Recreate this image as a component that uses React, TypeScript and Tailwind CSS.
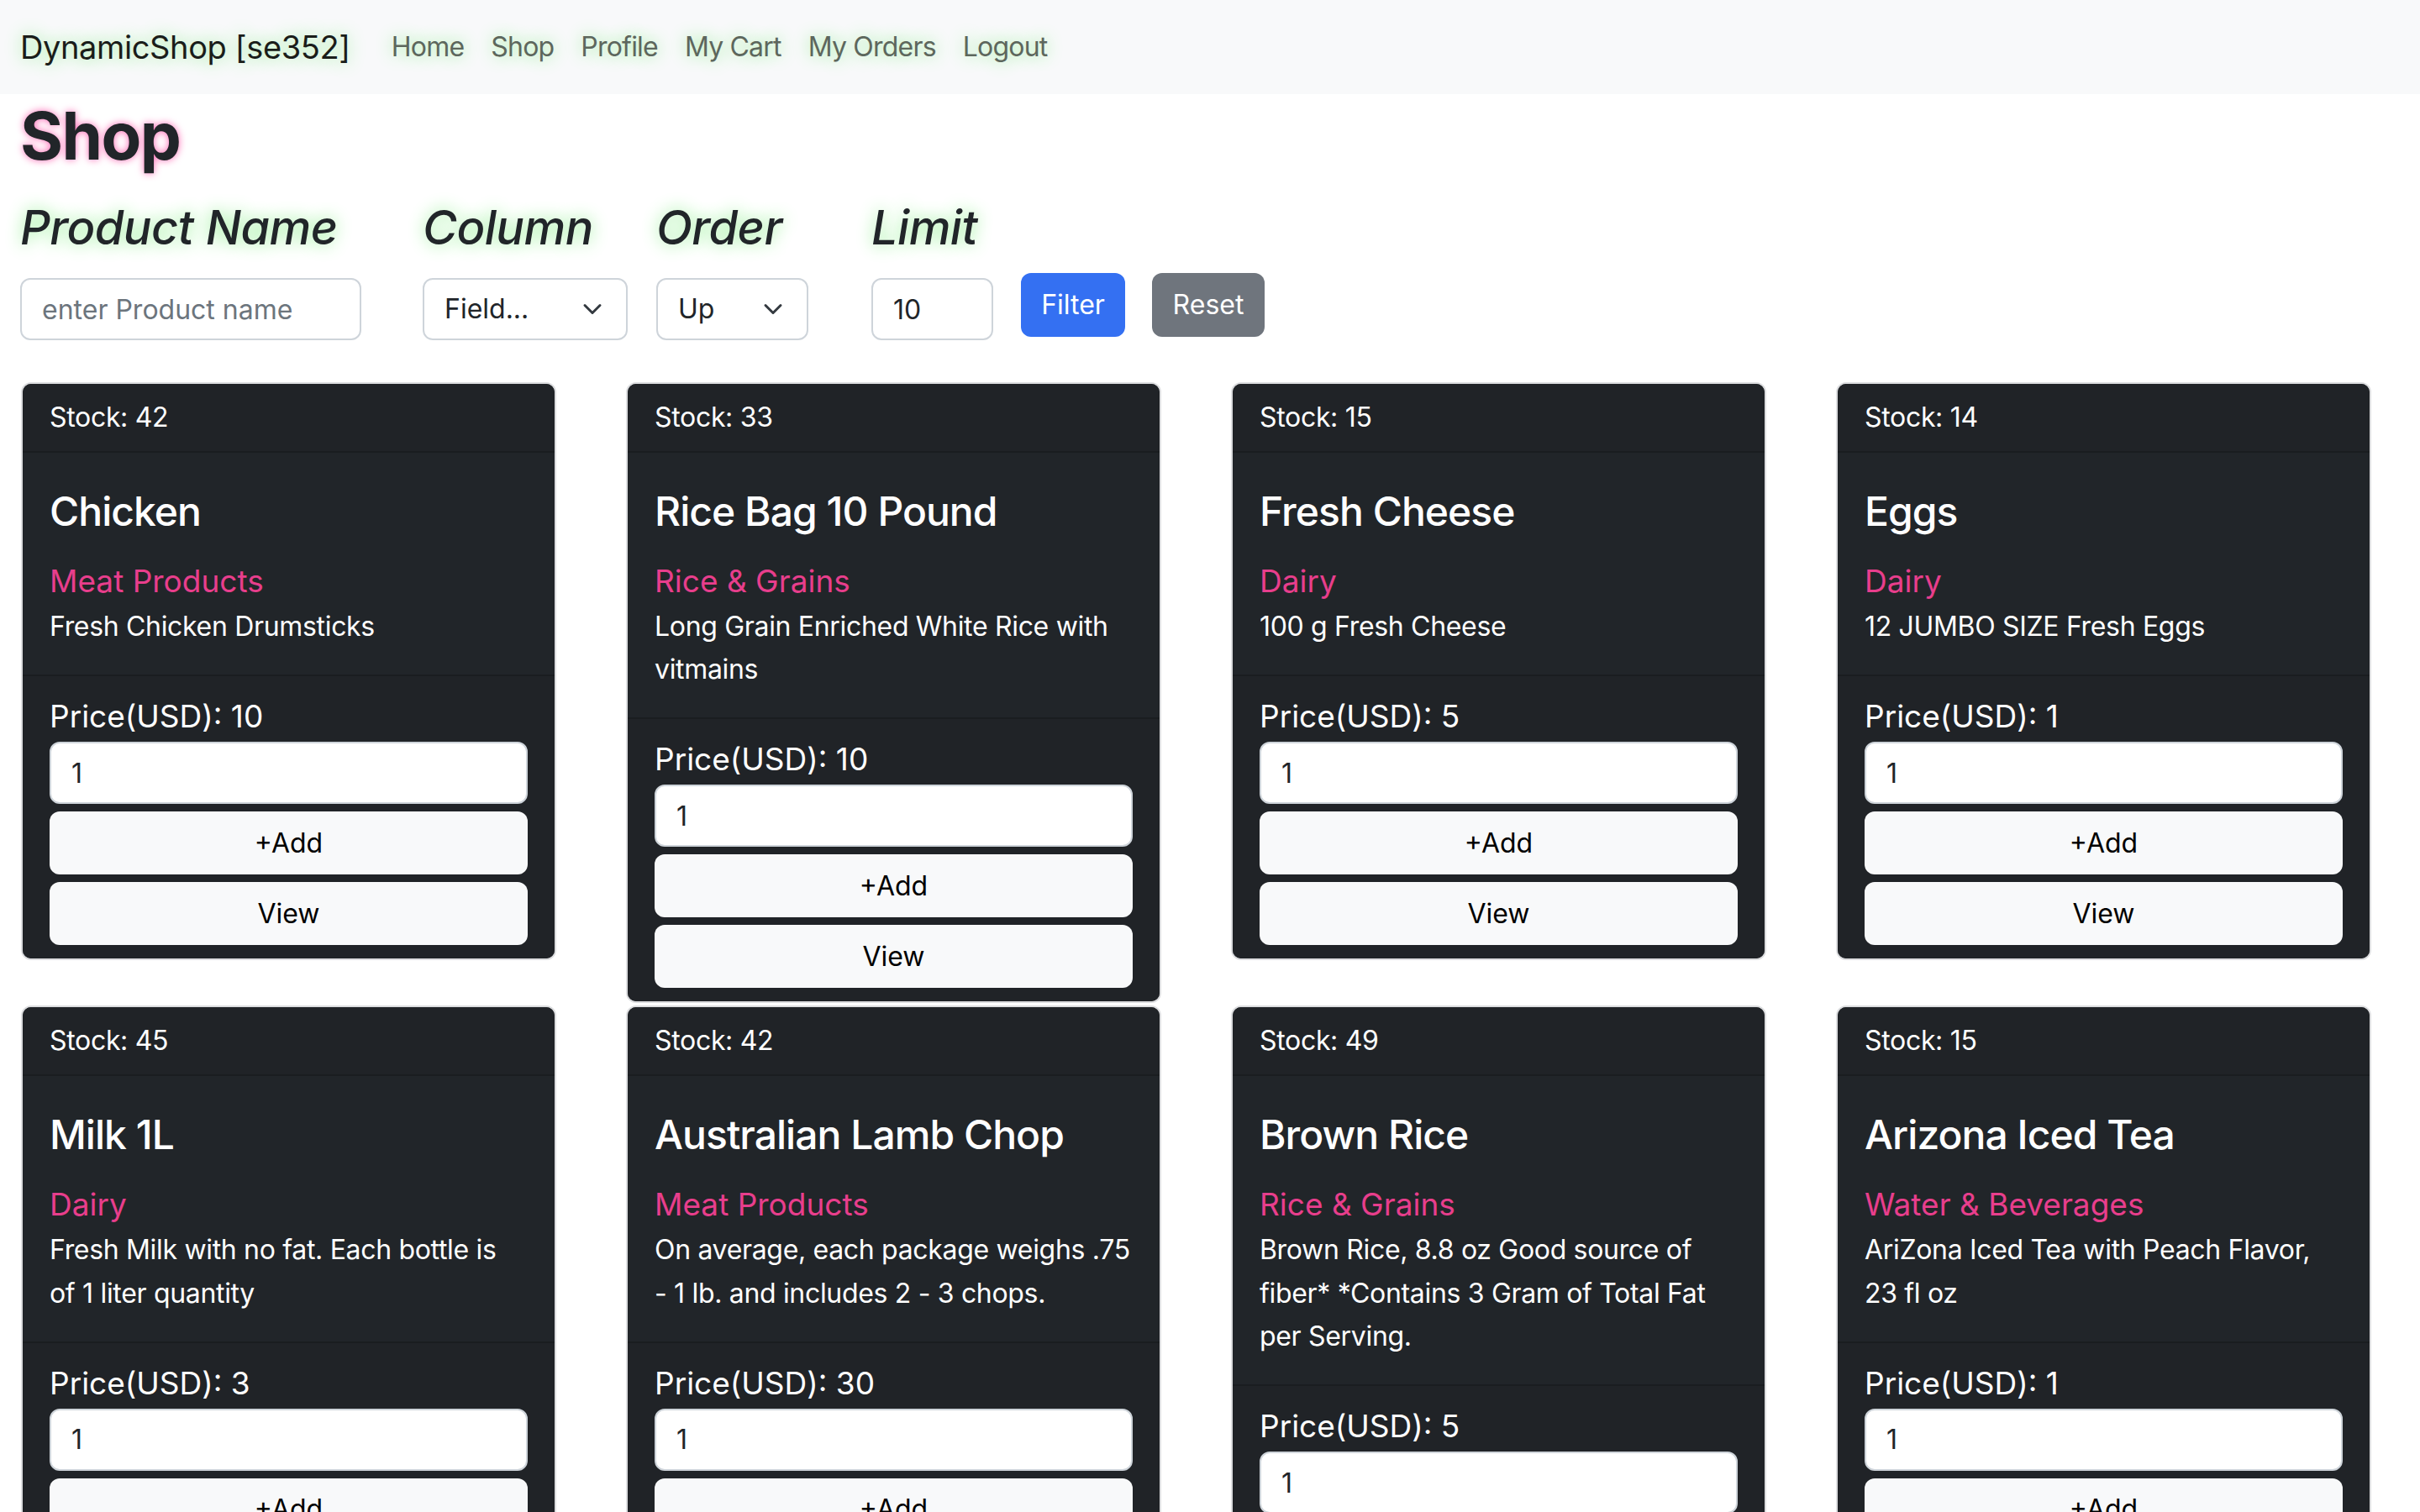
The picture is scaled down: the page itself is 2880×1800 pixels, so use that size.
import React from 'react';

interface Product {
  stock: number;
  name: string;
  category: string;
  desc: string[];
  price: number;
}

// description lines are split the way the page wraps them
const products: Product[] = [
  { stock: 42, name: 'Chicken', category: 'Meat Products', desc: ['Fresh Chicken Drumsticks'], price: 10 },
  { stock: 33, name: 'Rice Bag 10 Pound', category: 'Rice & Grains', desc: ['Long Grain Enriched White Rice with', 'vitmains'], price: 10 },
  { stock: 15, name: 'Fresh Cheese', category: 'Dairy', desc: ['100 g Fresh Cheese'], price: 5 },
  { stock: 14, name: 'Eggs', category: 'Dairy', desc: ['12 JUMBO SIZE Fresh Eggs'], price: 1 },
  { stock: 45, name: 'Milk 1L', category: 'Dairy', desc: ['Fresh Milk with no fat. Each bottle is', 'of 1 liter quantity'], price: 3 },
  { stock: 42, name: 'Australian Lamb Chop', category: 'Meat Products', desc: ['On average, each package weighs .75', '- 1 lb. and includes 2 - 3 chops.'], price: 30 },
  { stock: 49, name: 'Brown Rice', category: 'Rice & Grains', desc: ['Brown Rice, 8.8 oz Good source of', 'fiber* *Contains 3 Gram of Total Fat', 'per Serving.'], price: 5 },
  { stock: 15, name: 'Arizona Iced Tea', category: 'Water & Beverages', desc: ['AriZona Iced Tea with Peach Flavor,', '23 fl oz'], price: 1 },
];

const navLinks = ['Home', 'Shop', 'Profile', 'My Cart', 'My Orders', 'Logout'];

const Chevron = () => (
  <svg width="24" height="24" viewBox="0 0 16 16" fill="none" className="mr-[4px] shrink-0">
    <path d="m2 5 6 6 6-6" stroke="#343a40" strokeWidth="2" strokeLinecap="round" strokeLinejoin="round" />
  </svg>
);

const ProductCard: React.FC<{ p: Product }> = ({ p }) => (
  <div className="w-[637px] rounded-[12px] border-2 border-[#dcdddf] bg-[#212529] text-white overflow-hidden">
    <div className="px-[32px] py-[16px] text-[32px] leading-[48px] tracking-[-0.01em] bg-[#202327] border-b-2 border-[#1a1d20]">
      Stock: {p.stock}
    </div>
    <div className="p-[32px]">
      <h5 className="text-[48px] leading-[76px] mb-[17px] font-medium tracking-[-0.02em]">{p.name}</h5>
      <div className="text-[37px] leading-[56px] text-[#e83e8c]">{p.category}</div>
      <p className="text-[32px] leading-[51.2px] tracking-[-0.01em]">
        {p.desc.map((line, i) => (
          <span key={i} className="block whitespace-nowrap">
            {line}
          </span>
        ))}
      </p>
    </div>
    <div className="px-[32px] pt-[18px] pb-[16px] bg-[#202327] border-t-2 border-[#1a1d20]">
      <div className="text-[37px] leading-[60px]">Price(USD): {p.price}</div>
      <input
        type="number"
        defaultValue={1}
        className="w-full h-[74px] px-[24px] text-[32px] text-[#212529] bg-white border-2 border-[#ced4da] rounded-[12px] outline-none"
      />
      <button className="w-full h-[75px] mt-[9px] text-[32px] text-black bg-[#f8f9fa] rounded-[12px]">+Add</button>
      <button className="w-full h-[75px] mt-[9px] text-[32px] text-black bg-[#f8f9fa] rounded-[12px]">View</button>
    </div>
  </div>
);

const labelCls = 'text-[56px] leading-[77px] italic font-medium tracking-[-0.01em] mb-[21px] whitespace-nowrap [text-shadow:0_0_20px_#90ee90]';

const App: React.FC = () => {
  return (
    <div className="min-h-screen bg-white text-[#212529] font-[Inter,sans-serif] text-[32px] leading-[48px]">
      <nav className="h-[112px] bg-[#f8f9fa] flex items-center px-[24px]">
        <span className="text-[38px] leading-[60px] tracking-[-0.01em] mr-[33px] text-[#1a1d1a] [text-shadow:0_0_20px_#90ee90]">
          DynamicShop [se352]
        </span>
        {navLinks.map((l) => (
          <a key={l} className="px-[16px] text-[32px] tracking-[-0.025em] text-[#5d675d] [text-shadow:0_0_20px_#90ee90]">
            {l}
          </a>
        ))}
      </nav>

      <div className="px-[24px]">
        <h1 className="pt-[2px] text-[78px] leading-[96px] font-bold tracking-[-0.02em] [text-shadow:0_0_10px_#ff69b4]">Shop</h1>

        <div className="flex items-end mt-[23px]">
          <div className="flex flex-col w-[406px]">
            <h2 className={labelCls}>Product Name</h2>
            <input
              placeholder="enter Product name"
              className="w-[406px] h-[74px] px-[24px] text-[32px] border-2 border-[#ced4da] rounded-[12px] placeholder:text-[#6c757d] outline-none"
            />
          </div>
          <div className="flex flex-col w-[244px] ml-[73px]">
            <h2 className={labelCls}>Column</h2>
            <div className="w-[244px] h-[74px] px-[24px] flex items-center justify-between border-2 border-[#ced4da] rounded-[12px]">
              <span>Field...</span>
              <Chevron />
            </div>
          </div>
          <div className="flex flex-col w-[181px] ml-[34px]">
            <h2 className={labelCls}>Order</h2>
            <div className="w-[181px] h-[74px] px-[24px] flex items-center justify-between border-2 border-[#ced4da] rounded-[12px]">
              <span>Up</span>
              <Chevron />
            </div>
          </div>
          <div className="flex flex-col w-[145px] ml-[75px]">
            <h2 className={labelCls}>Limit</h2>
            <input
              defaultValue="10"
              className="w-[145px] h-[74px] px-[24px] text-[32px] border-2 border-[#ced4da] rounded-[12px] outline-none"
            />
          </div>
          <button className="ml-[33px] mb-[4px] w-[124px] h-[76px] shrink-0 rounded-[12px] bg-[#3470f2] text-white text-[32px]">Filter</button>
          <button className="ml-[32px] mb-[4px] w-[134px] h-[76px] shrink-0 rounded-[12px] bg-[#6f757d] text-white text-[32px]">Reset</button>
        </div>
      </div>

      <div className="grid grid-cols-[repeat(4,720px)] items-start gap-y-[3px] pl-[25px] mt-[50px] pb-[40px]">
        {products.map((p, i) => (
          <ProductCard key={i} p={p} />
        ))}
      </div>
    </div>
  );
};

export default App;
